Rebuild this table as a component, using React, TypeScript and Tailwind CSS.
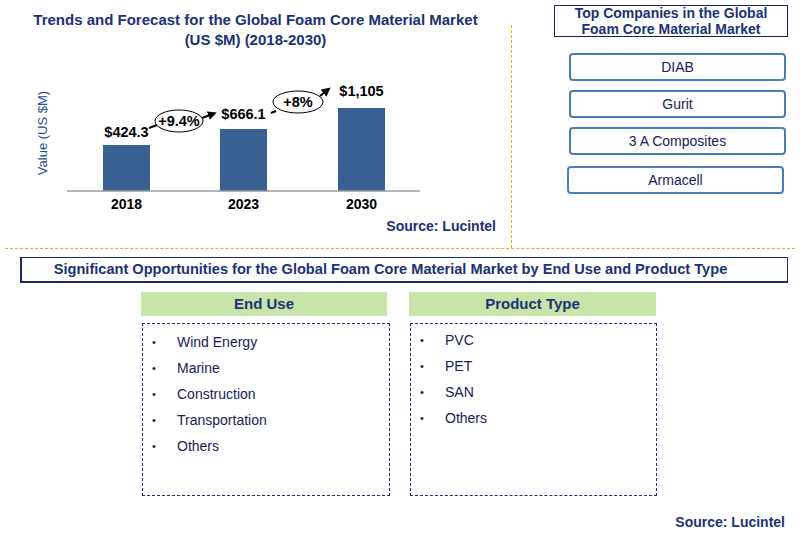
import React from 'react'

const navy = 'text-[#1a3278]'

const endUses = ['Wind Energy', 'Marine', 'Construction', 'Transportation', 'Others']
const productTypes = ['PVC', 'PET', 'SAN', 'Others']

const companies = [
  { name: 'DIAB', cls: 'mt-[16px] ml-[57px]' },
  { name: 'Gurit', cls: 'mt-[9px] ml-[57px]' },
  { name: '3 A Composites', cls: 'mt-[9px] ml-[57px]' },
  { name: 'Armacell', cls: 'mt-[11px] ml-[55px]' },
]

function Arrow({ x1, y1, x2, y2 }: { x1: number; y1: number; x2: number; y2: number }) {
  return <line x1={x1} y1={y1} x2={x2} y2={y2} stroke="#000" strokeWidth={2} markerEnd="url(#head)" />
}

function Chart() {
  const bars = [
    { x: 103, top: 95, label: '$424.3', ly: 87, year: '2018' },
    { x: 220, top: 79, label: '$666.1', ly: 69, year: '2023' },
    { x: 338, top: 58, label: '$1,105', ly: 46, year: '2030' },
  ]
  return (
    <svg width={510} height={165} className="block" fontFamily="'Liberation Sans', Arial, sans-serif">
      <defs>
        <marker id="head" viewBox="0 0 10 10" refX="2" refY="5" markerWidth="4.5" markerHeight="4.5" orient="auto">
          <path d="M0 0 L10 5 L0 10 z" fill="#000" />
        </marker>
      </defs>
      <text
        x={0}
        y={0}
        transform="translate(47 83) rotate(-90)"
        textAnchor="middle"
        fontSize={13}
        fill="#2a4a94"
      >
        Value (US $M)
      </text>
      {bars.map(b => (
        <g key={b.year}>
          <rect x={b.x} y={b.top} width={47} height={141 - b.top} fill="#386092" />
          <text x={b.x + 23.5} y={b.ly} textAnchor="middle" fontSize={14.5} fontWeight="bold" fill="#000">
            {b.label}
          </text>
          <text x={b.x + 23.5} y={159} textAnchor="middle" fontSize={14} fontWeight="bold" fill="#000">
            {b.year}
          </text>
        </g>
      ))}
      <line x1={67} y1={141} x2={420} y2={141} stroke="#9a9a9a" strokeWidth={1.5} />

      {/* growth bubbles */}
      <line x1={149} y1={78} x2={157} y2={75} stroke="#000" strokeWidth={2} />
      <ellipse cx={179} cy={71} rx={24} ry={11} fill="#fff" stroke="#000" strokeWidth={1} />
      <text x={179} y={76} textAnchor="middle" fontSize={14.5} fontWeight="bold" fill="#000">+9.4%</text>
      <Arrow x1={202} y1={68} x2={210} y2={65} />

      <line x1={271} y1={63} x2={276} y2={61} stroke="#000" strokeWidth={2} />
      <ellipse cx={298} cy={52} rx={25} ry={11} fill="#fff" stroke="#000" strokeWidth={1} />
      <text x={298} y={57} textAnchor="middle" fontSize={14.5} fontWeight="bold" fill="#000">+8%</text>
      <Arrow x1={320} y1={46} x2={325} y2={42} />
    </svg>
  )
}

function ListBox({ items, pad }: { items: string[]; pad: string }) {
  return (
    <div className={`ml-[1px] h-[173px] border border-dashed border-[#1a2a6c] ${pad}`}>
      {items.map(it => (
        <div key={it} className="flex h-[26px] items-center text-[14px] text-[#16215a]">
          <span className="w-[34px] pl-[9px] text-[11px]">•</span>
          <span>{it}</span>
        </div>
      ))}
    </div>
  )
}

export default function App() {
  return (
    <div className="w-[800px] h-[539px] bg-white font-['Liberation_Sans',Arial,sans-serif] overflow-hidden">
      {/* Top half */}
      <div className="flex h-[248px]">
        <div className="w-[511px] flex flex-col">
          <div className={`pt-[10px] text-center text-[15px] font-bold leading-[20px] ${navy}`}>
            <div>Trends and Forecast for the Global Foam Core Material Market</div>
            <div>(US $M) (2018-2030)</div>
          </div>
          <Chart />
          <div className={`mt-[3px] pr-[15px] text-right text-[14px] font-bold leading-[16px] ${navy}`}>
            Source: Lucintel
          </div>
        </div>
        <div className="mt-[25px] w-0 border-l border-dashed border-l-[#f0b000]" />
        <div className="flex-1 flex flex-col">
          <div className={`mt-[5px] ml-[42px] w-[234px] h-[32px] border border-[#1a2050] flex flex-col items-center justify-center text-[14px] font-bold leading-[16px] ${navy}`}>
            <div>Top Companies in the Global</div>
            <div>Foam Core Material Market</div>
          </div>
          {companies.map(c => (
            <div
              key={c.name}
              className={`${c.cls} w-[217px] h-[28px] rounded-[4px] border-2 border-[#4a7ebb] flex items-center justify-center text-[14px] text-[#16215a]`}
            >
              {c.name}
            </div>
          ))}
        </div>
      </div>

      <div className="mx-[5px] border-t border-dashed border-[#f0b000]" />

      {/* Bottom half */}
      <div className={`mt-[8px] ml-[20px] w-[768px] h-[26px] pr-[28px] border border-[#1a2a6c] border-l-2 border-b-2 flex items-center justify-center text-[14.6px] font-bold ${navy}`}>
        Significant Opportunities for the Global Foam Core Material Market by End Use and Product Type
      </div>

      <div className="mt-[9px] ml-[141px] flex gap-[19px]">
        <div className="w-[249px] flex flex-col">
          <div className={`w-[246px] h-[24px] bg-[#c8e4a8] flex items-center justify-center text-[15px] font-bold ${navy}`}>
            End Use
          </div>
          <div className="mt-[7px]">
            <ListBox items={endUses} pad="pt-[5px]" />
          </div>
        </div>
        <div className="w-[248px] flex flex-col">
          <div className={`w-[247px] h-[24px] bg-[#c8e4a8] flex items-center justify-center text-[15px] font-bold ${navy}`}>
            Product Type
          </div>
          <div className="mt-[7px]">
            <ListBox items={productTypes} pad="pt-[3px]" />
          </div>
        </div>
      </div>

      <div className={`mt-[18px] pr-[15px] text-right text-[14px] font-bold leading-[16px] ${navy}`}>
        Source: Lucintel
      </div>
    </div>
  )
}
